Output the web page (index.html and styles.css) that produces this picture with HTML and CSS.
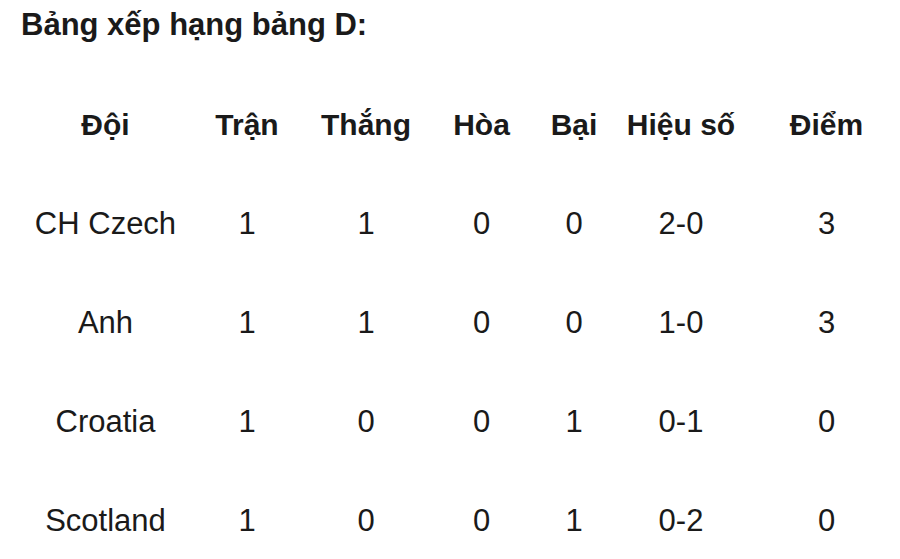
FILE: index.html
```html
<!DOCTYPE html>
<html lang="vi">
<head>
<meta charset="utf-8">
<title>Bảng xếp hạng bảng D</title>
<link rel="stylesheet" href="styles.css">
</head>
<body>
<div class="page">
  <h1 class="title">Bảng xếp hạng bảng D:</h1>
  <div class="standings">
    <div class="cell head">Đội</div>
    <div class="cell head">Trận</div>
    <div class="cell head">Thắng</div>
    <div class="cell head">Hòa</div>
    <div class="cell head">Bại</div>
    <div class="cell head">Hiệu số</div>
    <div class="cell head">Điểm</div>

    <div class="cell">CH Czech</div>
    <div class="cell">1</div>
    <div class="cell">1</div>
    <div class="cell">0</div>
    <div class="cell">0</div>
    <div class="cell">2-0</div>
    <div class="cell">3</div>

    <div class="cell">Anh</div>
    <div class="cell">1</div>
    <div class="cell">1</div>
    <div class="cell">0</div>
    <div class="cell">0</div>
    <div class="cell">1-0</div>
    <div class="cell">3</div>

    <div class="cell">Croatia</div>
    <div class="cell">1</div>
    <div class="cell">0</div>
    <div class="cell">0</div>
    <div class="cell">1</div>
    <div class="cell">0-1</div>
    <div class="cell">0</div>

    <div class="cell">Scotland</div>
    <div class="cell">1</div>
    <div class="cell">0</div>
    <div class="cell">0</div>
    <div class="cell">1</div>
    <div class="cell">0-2</div>
    <div class="cell">0</div>
  </div>
</div>
</body>
</html>
```
FILE: styles.css
```css
html, body {
  margin: 0;
  padding: 0;
  background: #ffffff;
  overflow: hidden;
}

.page {
  width: 900px;
  height: 559px;
  padding: 7px 0 0 21px;
  box-sizing: border-box;
  font-family: "Liberation Sans", Arial, sans-serif;
  font-size: 31px;
  color: #1a1a1a;
}

.title {
  margin: 0;
  font-size: 31px;
  font-weight: bold;
  line-height: 36px;
}

.standings {
  margin-top: 32px;
  margin-left: -1px;
  display: grid;
  grid-template-columns: 171px 112px 126px 105px 80px 134px 157px;
  grid-auto-rows: 99px;
}

.cell {
  text-align: center;
  line-height: 99px;
  white-space: nowrap;
}

.head {
  font-size: 30px;
  font-weight: bold;
}
```
